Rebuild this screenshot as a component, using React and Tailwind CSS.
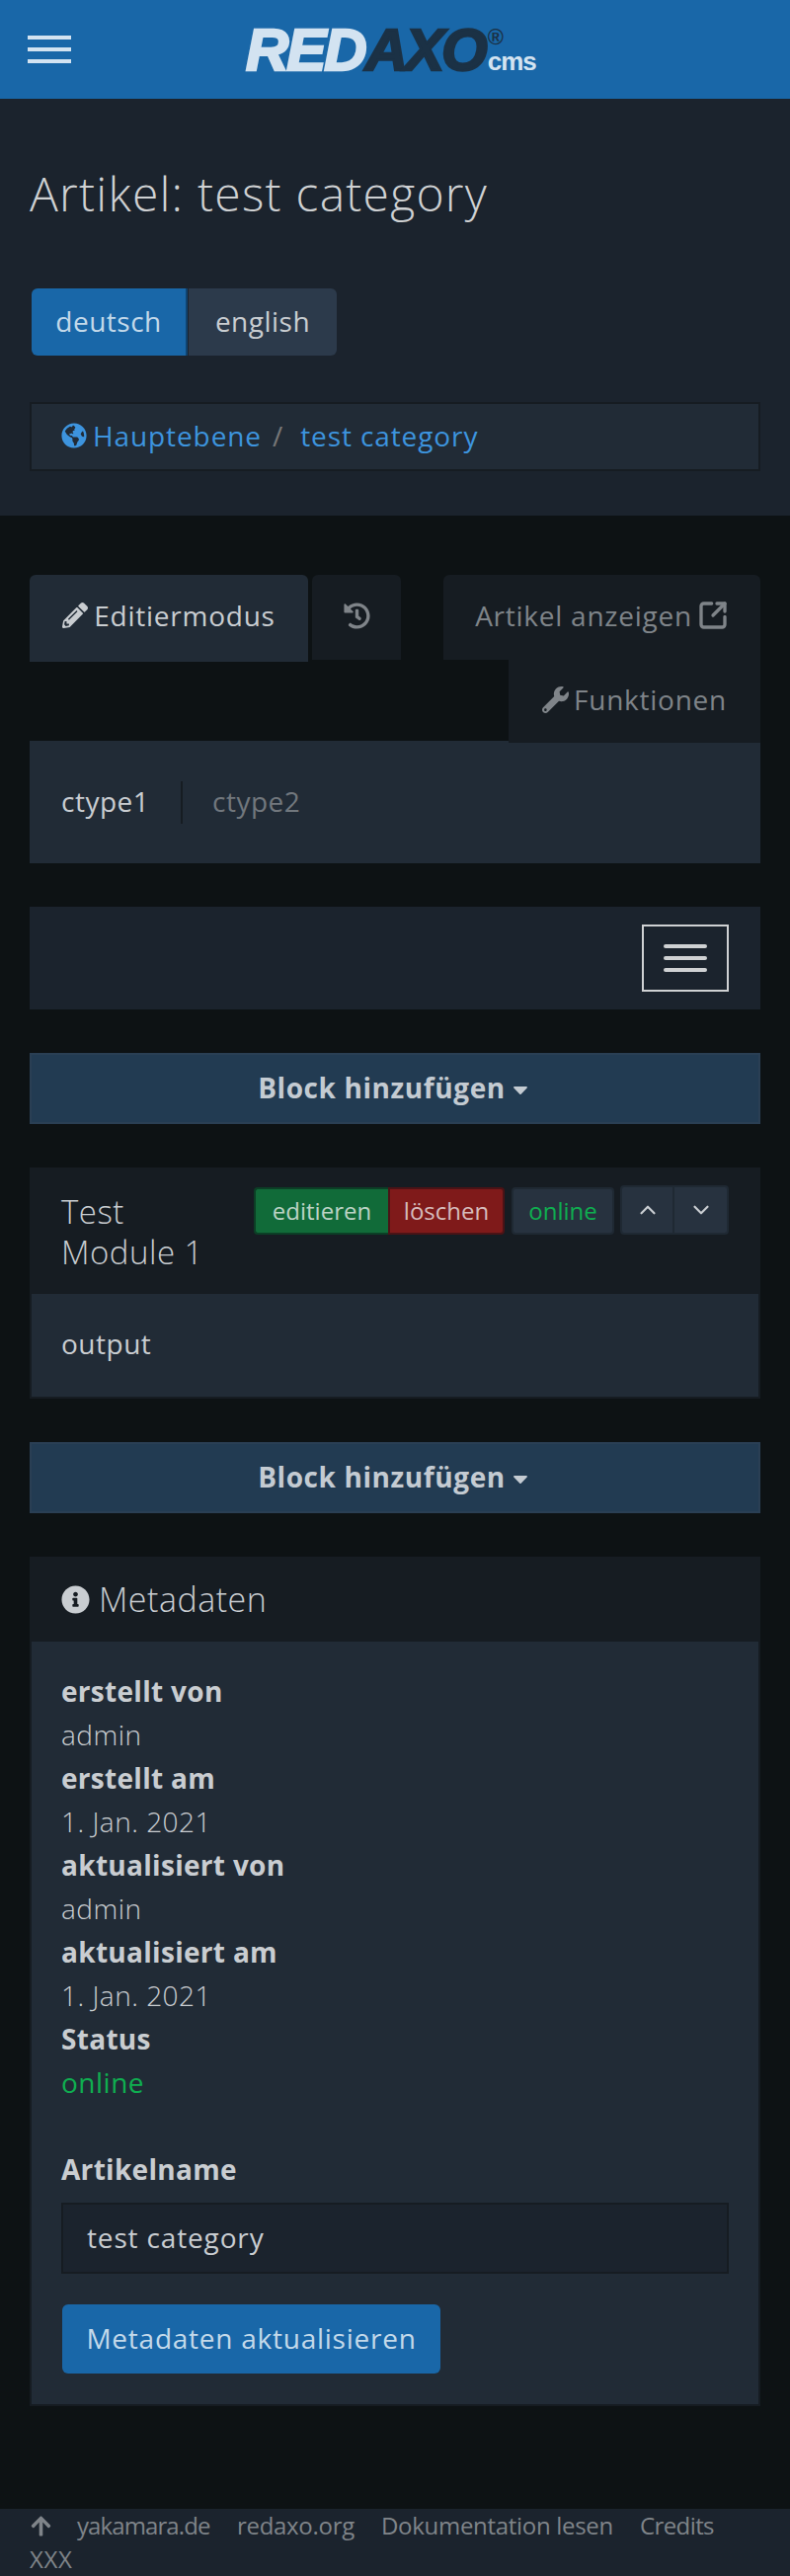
import { FaGlobeAmericas, FaPencilAlt, FaHistory, FaWrench, FaInfoCircle, FaArrowUp, FaCaretDown } from "react-icons/fa";
import { ChevronUp, ChevronDown, SquareArrowOutUpRight } from "lucide-react";

const META = [
  ["erstellt von", "admin"],
  ["erstellt am", "1. Jan. 2021"],
  ["aktualisiert von", "admin"],
  ["aktualisiert am", "1. Jan. 2021"],
];

function Logo() {
  return (
    <div className="flex items-start h-[44px] ml-[177px] font-['Liberation_Sans',sans-serif] tracking-normal">
      <span className="text-[60px] leading-[46px] font-bold italic tracking-[-2px] text-[#d3e3f1] [-webkit-text-stroke:2.5px_#d3e3f1]">RED</span>
      <span className="text-[60px] leading-[46px] font-bold italic tracking-[-3px] text-[#1b3145] [-webkit-text-stroke:2.5px_#1b3145]">AXO</span>
      <div className="flex flex-col ml-[3px] -mt-[2px]">
        <span className="text-[22px] leading-[24px] font-bold text-[#1b3145]">®</span>
        <span className="text-[26px] leading-[24px] font-bold text-[#d3e3f1] tracking-[-1px]">cms</span>
      </div>
    </div>
  );
}

function AddBlock() {
  return (
    <div className="h-[72px] border-2 border-[#2a3f54] bg-[#223b52] flex items-center justify-center gap-[3px] text-[28px] font-bold tracking-[0.6px] text-[#c4cbd2] pb-[2px]">
      Block hinzufügen
      <FaCaretDown className="text-[24px] mt-[4px]" />
    </div>
  );
}

export default function App() {
  return (
    <div className="w-[800px] h-[2608px] bg-[#0d1214] text-[28px] leading-[44px] text-[#c9cdd1] font-['Open_Sans',sans-serif] tracking-[0.5px]">
      {/* header */}
      <div className="h-[100px] bg-[#1967a8] flex items-center pl-[28px]">
        <div className="w-[44px] flex flex-col gap-[8px]">
          <div className="h-[4px] bg-[#d3e3f1]" />
          <div className="h-[4px] bg-[#d3e3f1]" />
          <div className="h-[4px] bg-[#d3e3f1]" />
        </div>
        <Logo />
      </div>

      {/* page title */}
      <div className="bg-[#1b232d] px-[30px] pt-[63px] pb-[45px]">
        <h1 className="text-[48px] leading-[66px] font-light tracking-[1.25px] text-[#cfd1d3]">Artikel: test category</h1>
        <div className="flex mt-[63px] ml-[2px] h-[68px]">
          <div className="w-[158px] bg-[#1967a8] border-r-2 border-[#10436f] rounded-l-[6px] flex items-center justify-center text-[#c3d9ea] pb-[2px]">deutsch</div>
          <div className="w-[150px] ml-[1px] bg-[#2c3a4b] rounded-r-[6px] flex items-center justify-center pb-[2px]">english</div>
        </div>
        <div className="mt-[47px] h-[70px] border-2 border-[#161c22] bg-[#212b36] flex items-center px-[30px] text-[#3d94de] tracking-[0.9px] pb-[2px]">
          <FaGlobeAmericas className="text-[26px] mr-[6px]" />
          <span>Hauptebene</span>
          <span className="text-[#777] ml-[11px] mr-[17px]">/</span>
          <span>test category</span>
        </div>
      </div>

      {/* main */}
      <div className="px-[30px] pt-[60px]">
        <div className="flex h-[86px] items-start text-[#7f8489] tracking-[0.75px]">
          <div className="w-[282px] h-[88px] bg-[#212b36] rounded-t-[6px] flex items-center justify-center gap-[6px] text-[#c9cdd1] pb-[6px] relative">
            <FaPencilAlt className="text-[26px]" />
            Editiermodus
          </div>
          <div className="w-[90px] h-[86px] ml-[4px] bg-[#161c22] rounded-t-[6px] flex items-center justify-center pb-[4px]">
            <FaHistory className="text-[27px]" />
          </div>
          <div className="w-[321px] h-[86px] ml-auto bg-[#161c22] rounded-t-[6px] flex items-center justify-center gap-[5px] pb-[4px]">
            Artikel anzeigen
            <SquareArrowOutUpRight size={32} strokeWidth={2.5} />
          </div>
        </div>
        <div className="flex h-[82px] justify-end items-start text-[#7f8489] tracking-[0.75px]">
          <div className="w-[255px] h-[84px] bg-[#161c22] flex items-center justify-center gap-[5px] relative pb-[4px]">
            <FaWrench className="text-[27px]" />
            Funktionen
          </div>
        </div>
        <div className="h-[124px] bg-[#212b36] flex items-center px-[32px]">
          <span className="w-[120px] -mt-[3px]">ctype1</span>
          <div className="w-[2px] h-[43px] bg-[#161c22] ml-[1px]" />
          <span className="ml-[30px] text-[#71777d] -mt-[3px]">ctype2</span>
        </div>

        <div className="h-[104px] mt-[44px] bg-[#1b232d] flex items-center justify-end pr-[32px]">
          <div className="w-[88px] h-[68px] border-2 border-[#cfd1d3] flex flex-col items-center justify-center gap-[8px]">
            <div className="w-[44px] h-[4px] rounded-full bg-[#cfd1d3]" />
            <div className="w-[44px] h-[4px] rounded-full bg-[#cfd1d3]" />
            <div className="w-[44px] h-[4px] rounded-full bg-[#cfd1d3]" />
          </div>
        </div>

        <div className="mt-[44px]">
          <AddBlock />
        </div>

        {/* slice */}
        <div className="mt-[44px] border-2 border-[#161c22]">
          <div className="h-[126px] bg-[#161c22] flex items-start pl-[30px] pr-[30px]">
            <div className="w-[160px] mt-[22px] text-[33px] leading-[41px] font-light">Test Module 1</div>
            <div className="flex items-start ml-auto mt-[16px] text-[24px] leading-[44px] tracking-normal">
              <div className="flex mt-[2px] h-[48px]">
                <div className="w-[136px] bg-[#116b39] border-2 border-[#0c3f26] border-r-0 rounded-l-[4px] flex items-center justify-center text-[#bcd3c5]">editieren</div>
                <div className="w-[118px] bg-[#7f1a1a] border-2 border-[#4b1316] rounded-r-[4px] flex items-center justify-center text-[#d6bcbc]">löschen</div>
              </div>
              <div className="w-[104px] h-[48px] mt-[2px] ml-[7px] bg-[#27323f] border-2 border-[#1f2933] rounded-[4px] flex items-center justify-center text-[#0fae50]">online</div>
              <div className="flex h-[50px] ml-[6px] bg-[#27323f] border-2 border-[#1f2933] rounded-[4px]">
                <div className="w-[53px] border-r-2 border-[#1f2933] flex items-center justify-center">
                  <ChevronUp size={26} strokeWidth={2} />
                </div>
                <div className="w-[53px] flex items-center justify-center">
                  <ChevronDown size={26} strokeWidth={2} />
                </div>
              </div>
            </div>
          </div>
          <div className="h-[104px] bg-[#212b36] flex items-center px-[30px] pb-[4px]">output</div>
        </div>

        <div className="mt-[44px]">
          <AddBlock />
        </div>

        {/* metadata */}
        <div className="mt-[44px] border-2 border-[#161c22] h-[860px] bg-[#212b36]">
          <div className="h-[84px] bg-[#161c22] flex items-center px-[30px] gap-[9px] text-[34px] font-light pb-[2px]">
            <FaInfoCircle className="text-[29px]" />
            Metadaten
          </div>
          <div className="px-[30px] pt-[28px]">
            {META.map(([label, value]) => (
              <div key={label}>
                <div className="font-bold tracking-[0.3px]">{label}</div>
                <div className="font-light">{value}</div>
              </div>
            ))}
            <div className="font-bold tracking-[0.3px]">Status</div>
            <div className="text-[#0fae50]">online</div>

            <div className="font-bold tracking-[0.3px] mt-[44px]">Artikelname</div>
            <div className="mt-[12px] h-[72px] border-2 border-[#161c22] bg-[#1b232d] flex items-center px-[24px] tracking-[0.85px] pb-[2px]">test category</div>
            <div className="mt-[31px] ml-[1px] w-[383px] h-[70px] bg-[#1967a8] rounded-[6px] flex items-center justify-center text-[#c3d9ea] tracking-[0.75px] pb-[2px]">Metadaten aktualisieren</div>
          </div>
        </div>
      </div>

      {/* footer */}
      <div className="mt-[104px] h-[68px] bg-[#1b232d] px-[30px] text-[24px] leading-[34px] text-[#7f8489] tracking-[-0.3px]">
        <div className="flex items-center">
          <FaArrowUp className="text-[23px] mr-[25px]" />
          <span className="w-[162px] tracking-[-0.9px]">yakamara.de</span>
          <span className="w-[146px]">redaxo.org</span>
          <span className="w-[262px]">Dokumentation lesen</span>
          <span className="tracking-[-0.6px]">Credits</span>
        </div>
        <div className="tracking-[0.6px]">XXX</div>
      </div>
    </div>
  );
}
